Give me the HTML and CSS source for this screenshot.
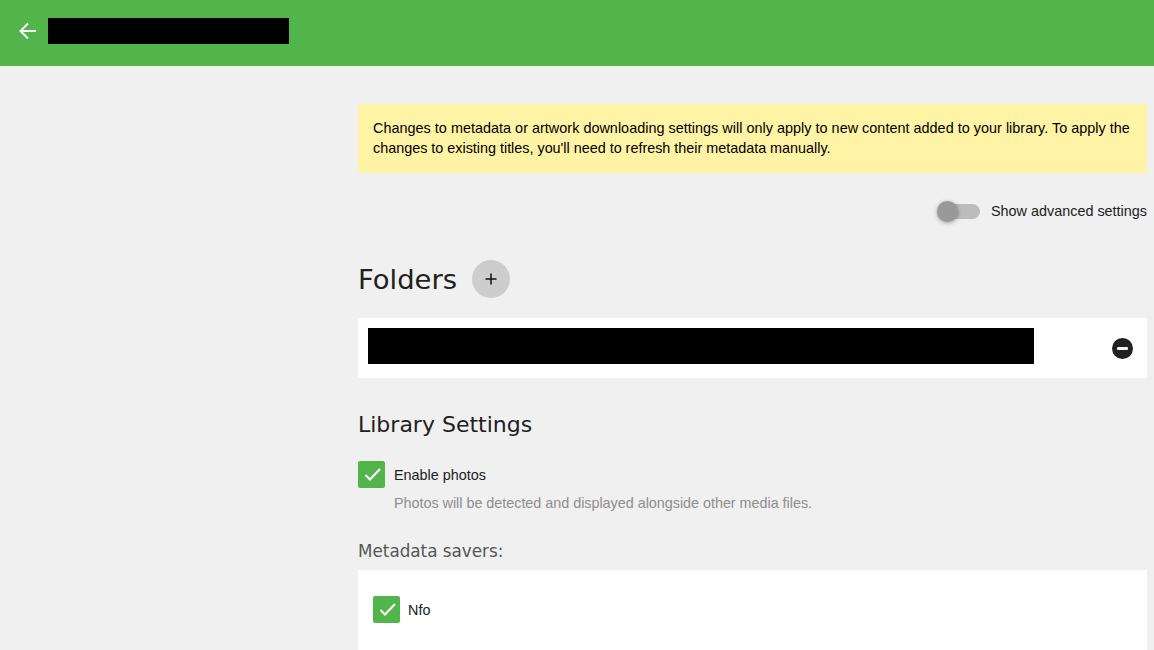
FILE: index.html
```html
<!DOCTYPE html>
<html lang="en">
<head>
<meta charset="utf-8">
<title>Library settings</title>
<link rel="stylesheet" href="styles.css">
</head>
<body>
<header class="topbar">
  <svg class="back" viewBox="0 0 20 20" width="20" height="20" aria-hidden="true"><path d="M18 10H2.5M10 2.5 2.5 10l7.5 7.5" fill="none" stroke="#fff" stroke-width="1.9"/></svg>
  <div class="redact title-redact"></div>
</header>
<main class="content">
  <div class="notice">Changes to metadata or artwork downloading settings will only apply to new content added to your library. To apply the changes to existing titles, you'll need to refresh their metadata manually.</div>
  <div class="advanced">
    <span class="switch"><span class="knob"></span></span>
    <span>Show advanced settings</span>
  </div>
  <div class="folders-head">
    <h1>Folders</h1>
    <span class="add">
      <svg viewBox="0 0 12 12" width="12" height="12" aria-hidden="true"><path d="M6 0.5v11M0.5 6h11" stroke="#111" stroke-width="1.5" fill="none"/></svg>
    </span>
  </div>
  <div class="folder-row">
    <div class="redact folder-redact"></div>
    <svg class="remove" viewBox="0 0 21 21" width="21" height="21" aria-hidden="true"><circle cx="10.5" cy="10.5" r="10.5" fill="#202020"/><rect x="5" y="9" width="11" height="3" rx="1" fill="#f2f2f2"/></svg>
  </div>
  <h2>Library Settings</h2>
  <label class="check-row">
    <span class="box"><svg viewBox="0 0 27 27" width="27" height="27" aria-hidden="true"><path d="M7.5 14l4.5 4.5L22 8" fill="none" stroke="#fff" stroke-width="2"/></svg></span>
    <span>Enable photos</span>
  </label>
  <p class="hint">Photos will be detected and displayed alongside other media files.</p>
  <h3>Metadata savers:</h3>
  <div class="savers">
    <label class="check-row saver">
      <span class="box"><svg viewBox="0 0 27 27" width="27" height="27" aria-hidden="true"><path d="M7.5 14l4.5 4.5L22 8" fill="none" stroke="#fff" stroke-width="2"/></svg></span>
      <span>Nfo</span>
    </label>
  </div>
</main>
</body>
</html>
```

FILE: styles.css
```css
* { box-sizing: border-box; }
html, body { height: 100%; overflow: hidden; }
body {
  margin: 0;
  background: #f0f0f0;
  color: #202020;
  font-family: "Liberation Sans", Arial, sans-serif;
  font-size: 14.4px;
}
.topbar {
  height: 66px;
  background: #52b54b;
  display: flex;
  align-items: flex-start;
  padding: 18px 0 0 18px;
}
.back { margin-top: 3px; }
.redact { background: #000; }
.title-redact { width: 241px; height: 26px; margin-left: 10px; }
.content { padding: 38px 7px 0 358px; }
.notice {
  background: #fff3a5;
  color: #000;
  border-radius: 3px;
  padding: 14px 15px 15px;
  line-height: 20px;
  letter-spacing: -0.012px;
}
.notice::first-line { letter-spacing: 0.026px; }
.advanced {
  display: flex;
  align-items: center;
  justify-content: flex-end;
  margin-top: 27px;
  height: 22px;
  gap: 11px;
}
.switch {
  position: relative;
  display: block;
  width: 33px;
  height: 15px;
  border-radius: 8px;
  background: #bcbcbc;
}
.knob {
  position: absolute;
  left: -10px;
  top: -3px;
  width: 21px;
  height: 21px;
  border-radius: 50%;
  background: #999;
  box-shadow: 0 1px 4px rgba(0,0,0,.35);
}
.folders-head {
  display: flex;
  align-items: center;
  gap: 15px;
  margin-top: 38px;
  height: 38px;
}
h1, h2, h3 {
  margin: 0;
  font-family: "DejaVu Sans", sans-serif;
  font-weight: 400;
}
h1 { font-size: 27.4px; }
h2 { font-size: 22px; margin-top: 34px; line-height: 26px; }
h3 { font-size: 16.8px; color: #555; margin-top: 26px; line-height: 24px; }
.add {
  width: 38px;
  height: 38px;
  border-radius: 50%;
  background: #cdcdcd;
  display: flex;
  align-items: center;
  justify-content: center;
}
.folder-row {
  display: flex;
  align-items: flex-start;
  justify-content: space-between;
  height: 60px;
  margin-top: 20px;
  padding: 10px 14px 0 10px;
  background: #fff;
}
.remove { margin-top: 10px; }
.folder-redact { width: 666px; height: 36px; }
.check-row {
  display: flex;
  align-items: center;
  gap: 9px;
  margin-top: 23px;
}
.box {
  width: 27px;
  height: 27px;
  border-radius: 2px;
  background: #52b54b;
  display: block;
}
.box svg { display: block; }
.hint {
  margin: 5px 0 0 36px;
  color: #8e8e8e;
  line-height: 20px;
  letter-spacing: -0.03px;
}
.savers {
  background: #fff;
  height: 90px;
  margin-top: 7px;
  padding: 26px 15px 0;
}
.saver { margin-top: 0; gap: 8px; }
```
